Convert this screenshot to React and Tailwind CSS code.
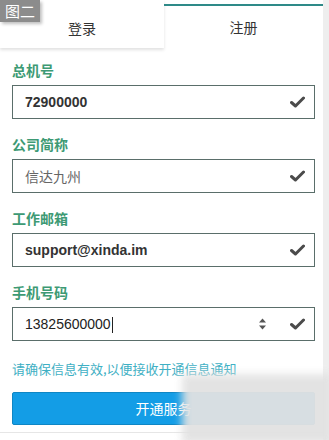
import React from "react";

const Check = () => (
  <svg width="15" height="12" viewBox="0 0 15 12" className="shrink-0">
    <path d="M1.5 6.5 L5.5 10 L13.5 2" fill="none" stroke="#4b4b4b" strokeWidth="3" strokeLinecap="round" strokeLinejoin="round" />
  </svg>
);

const Spinner = () => (
  <svg width="9" height="14" viewBox="0 0 9 14" className="shrink-0">
    <path d="M1 5.5 L4.5 1.5 L8 5.5 Z" fill="#555" />
    <path d="M1 8.5 L4.5 12.5 L8 8.5 Z" fill="#555" />
  </svg>
);

const fields = [
  { label: "总机号", value: "72900000", strong: true },
  { label: "公司简称", value: "信达九州", strong: false },
  { label: "工作邮箱", value: "support@xinda.im", strong: true },
  { label: "手机号码", value: "13825600000", strong: false, phone: true },
];

export default function App() {
  return (
    <div
      className="relative w-[329px] h-[440px] overflow-hidden bg-white"
      style={{ fontFamily: '"Noto Sans CJK SC", "Liberation Sans", sans-serif' }}
    >
      <div className="flex h-full">
        <div className="w-[323px] flex flex-col">
          {/* tabs */}
          <div className="flex h-[48px]">
            <div className="w-[164px] flex items-center justify-center pt-[8px] text-[14px] text-[#333] bg-white shadow-[0_2px_3px_rgba(0,0,0,0.12)]">
              登录
            </div>
            <div className="flex-1 flex flex-col">
              <div className="h-[4px]" />
              <div className="h-[2px] bg-[#2e8a88]" />
              <div className="flex-1 flex items-center justify-center text-[14px] text-[#333]">注册</div>
            </div>
          </div>

          <div className="px-[12px] pt-[12px] flex flex-col">
            {fields.map((f, i) => (
              <div key={i} className="flex flex-col mb-[15px]">
                <div className="text-[14px] font-bold text-[#3d9a74] leading-[20px] mb-[5px]">{f.label}</div>
                <div className="h-[34px] w-[303px] border border-[#5a6e6a] flex items-center pl-[12px] pr-[9px] bg-white">
                  <span
                    className={
                      f.strong
                        ? "text-[14px] font-bold text-[#333] flex-1"
                        : f.phone
                        ? "text-[14px] text-[#222] flex-1"
                        : "text-[14px] text-[#666] flex-1"
                    }
                    style={{ fontFamily: f.strong || f.phone ? '"Liberation Sans", "Noto Sans CJK SC", sans-serif' : undefined }}
                  >
                    {f.value}
                    {f.phone && <span className="inline-block w-[1px] h-[16px] bg-[#222] align-middle ml-[1px]" />}
                  </span>
                  {f.phone && (
                    <span className="mr-[23px] flex items-center">
                      <Spinner />
                    </span>
                  )}
                  <Check />
                </div>
              </div>
            ))}

            <div className="text-[13px] text-[#3fb0c4] leading-[18px] mt-[4px]">请确保信息有效,以便接收开通信息通知</div>

            <button className="mt-[14px] h-[33px] w-[303px] bg-[#139de6] border border-[#0f86c4] rounded-[2px] text-white text-[14px]">
              开通服务
            </button>
          </div>
          <div className="mt-auto h-[8px] border-t border-[#e6e6e6]" />
        </div>
        <div className="flex-1 bg-[#eeeeee]" />
      </div>

      {/* badge */}
      <div className="absolute left-0 top-0 h-[22px] px-[5px] flex items-center bg-[#8c8c8c] text-white text-[15px] shadow-[2px_2px_3px_rgba(0,0,0,0.25)]">
        图二
      </div>

      {/* watermark blur */}
      <div className="absolute left-[182px] top-[374px] w-[150px] h-[70px] bg-[#e2e2e2] opacity-95 blur-[4px]" />
    </div>
  );
}
